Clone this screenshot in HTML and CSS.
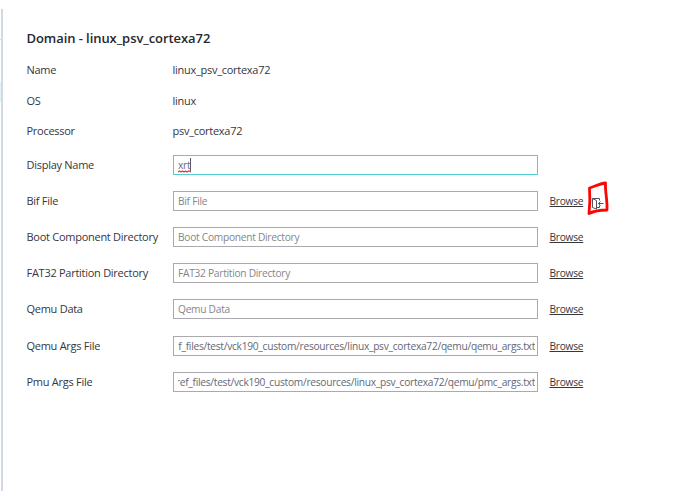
FILE: index.html
```html
<!DOCTYPE html>
<html lang="en">
<head>
<meta charset="utf-8">
<title>Domain</title>
<link rel="stylesheet" href="styles.css">
</head>
<body>
<aside class="rail"><div class="rail-line"></div><div class="rail-selected"></div></aside>
<main class="panel">
<h1>Domain - linux_psv_cortexa72</h1>
<div class="info"><span>Name</span><span>linux_psv_cortexa72</span></div>
<div class="info"><span>OS</span><span>linux</span></div>
<div class="info"><span>Processor</span><span>psv_cortexa72</span></div>
<div class="fields">
<div class="row"><label>Display Name</label><div class="field focused"><span class="typed">xrt<svg class="squiggle" viewBox="0 0 13 3"><path d="M0 2 L1.5 1 L3 2 L4.5 1 L6 2 L7.5 1 L9 2 L10.5 1 L13 2"/></svg></span><i class="caret"></i></div></div>
<div class="row"><label>Bif File</label><div class="field">Bif File</div><a>Browse</a>
<svg class="mark" viewBox="0 0 24 36"><path class="outline" d="M3.5 8 C8 7 13 3.5 19.5 3 C19 12 21.5 20 21 30 C15 30 8 31 3 33.5 C4 25 4 15 3.5 8 Z"/><path class="door" d="M6.5 18.5 H13.5 V20.5 M6.5 18.5 V27.5 L10.5 29 V20.5 L6.5 18.5 M10.5 27.5 H13.5 V25.5 M17.5 23.5 H12.5 M14.5 21.5 L12.5 23.5 L14.5 25.5"/></svg></div>
<div class="row"><label>Boot Component Directory</label><div class="field">Boot Component Directory</div><a>Browse</a></div>
<div class="row"><label>FAT32 Partition Directory</label><div class="field">FAT32 Partition Directory</div><a>Browse</a></div>
<div class="row"><label>Qemu Data</label><div class="field">Qemu Data</div><a>Browse</a></div>
<div class="row"><label>Qemu Args File</label><div class="field path"><span class="clip">f_files/test/vck190_custom/resources/linux_psv_cortexa72/qemu/qemu_args.txt</span></div><a>Browse</a></div>
<div class="row"><label>Pmu Args File</label><div class="field path"><span class="clip">ref_files/test/vck190_custom/resources/linux_psv_cortexa72/qemu/pmc_args.txt</span></div><a>Browse</a></div>
</div>
</main>
</body>
</html>
```
FILE: styles.css
```css
* { box-sizing: border-box; }
body {
  margin: 0;
  height: 491px;
  overflow: hidden;
  display: flex;
  background: #fff;
  color: #36363c;
  font: 11px/16px "Open Sans", "Noto Sans", sans-serif;
  letter-spacing: -.27px;
}
.rail { width: 3px; margin-top: 9px; border-right: 2px solid #d3d9e2; flex: none; }
.rail-line { height: 1px; margin-top: 30px; background: #d8dde4; }
.rail-selected { height: 20px; margin-top: 42px; background: #e1f2f6; }
.panel { padding: 29px 0 0 23.5px; flex: 1; }
h1 { margin: 0 0 15.4px; font-size: 13px; line-height: 18px; font-weight: 600; color: #27272d; letter-spacing: -.07px; }
.info { display: grid; grid-template-columns: 146px 1fr; height: 30.5px; }
.fields { margin-top: -7.1px; }
.row {
  display: grid;
  grid-template-columns: 146.5px 365px 47px 24px;
  align-items: center;
  height: 36.15px;
}
.row a { margin-left: 11.5px; text-decoration: underline; font-size: 10.2px; }
.field {
  display: flex;
  align-items: center;
  height: 20px;
  padding: 0 2px 0 4px;
  border: 1px solid #a9a9ae;
  color: #858588;
  font-size: 10.2px;
  white-space: nowrap;
}
.focused { border-color: #4fd0d4; color: #676a79; }
.typed { position: relative; }
.squiggle { position: absolute; left: 0; bottom: 0; width: 13px; height: 3px; fill: none; stroke: #f5303c; stroke-width: 1.2; }
.caret { width: 1px; height: 13px; background: #555867; }
.path { color: #646775; }
.clip { display: flex; justify-content: flex-end; width: 100%; overflow: hidden; }
.mark { width: 24px; height: 36px; margin: -6px 0 0 1px; fill: none; }
.outline { stroke: #fb0505; stroke-width: 2.8; stroke-linejoin: round; }
.door { stroke: #53535a; stroke-width: 1; }
```
